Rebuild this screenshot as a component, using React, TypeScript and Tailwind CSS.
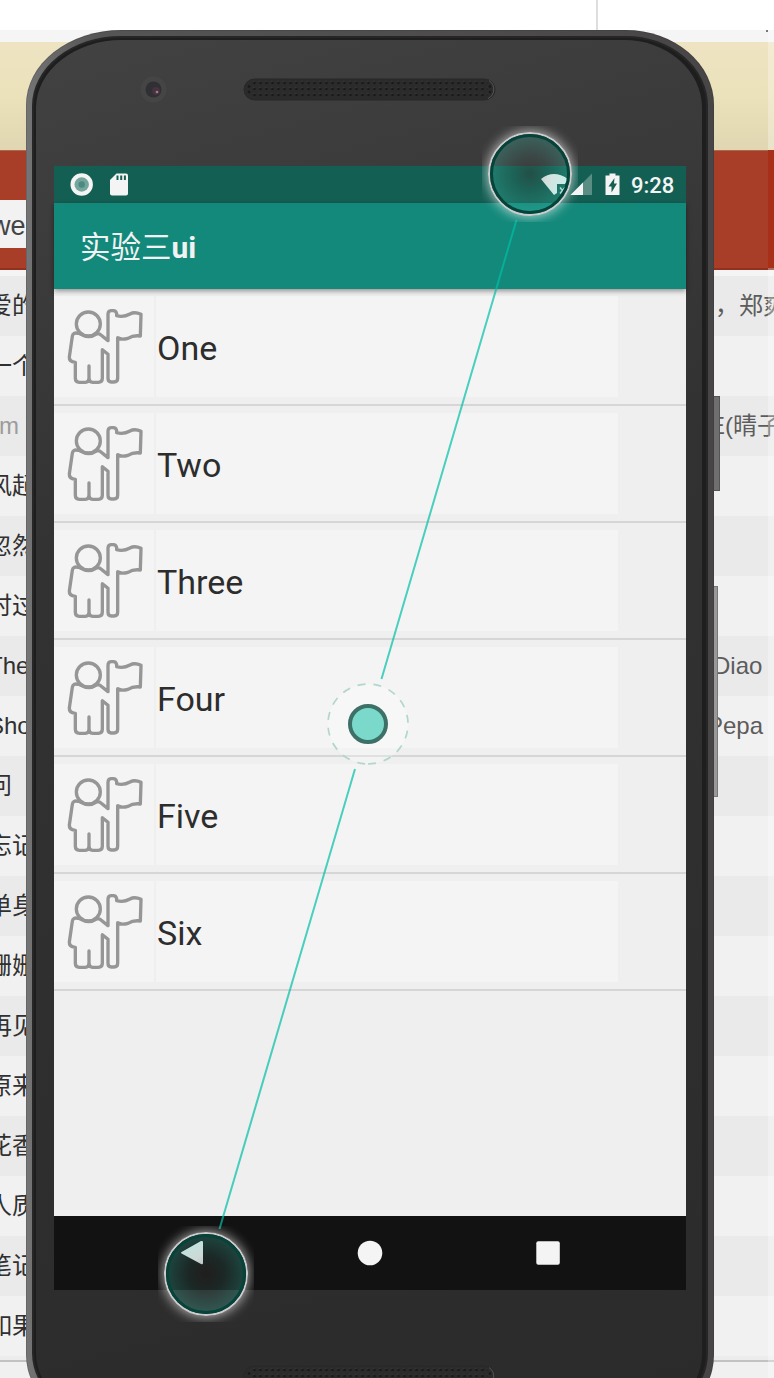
import React from "react";

const songs = [
  { left: "爱的", right: "，郑爽", shift: "ml-[715px]" },
  { left: "一个", right: "", shift: "" },
  { left: "m Y", right: "E(晴子", shift: "ml-[709px]", muted: true },
  { left: "风起", right: "", shift: "" },
  { left: "忽然", right: "", shift: "" },
  { left: "时过", right: "", shift: "" },
  { left: "The", right: "Diao", shift: "ml-[713px]" },
  { left: "Sho", right: "Pepa", shift: "ml-[707px]" },
  { left: "问", right: "", shift: "" },
  { left: "忘记", right: "", shift: "" },
  { left: "单身", right: "", shift: "" },
  { left: "珊姗", right: "", shift: "" },
  { left: "再见", right: "", shift: "" },
  { left: "原来", right: "", shift: "" },
  { left: "花香", right: "", shift: "" },
  { left: "人质", right: "", shift: "" },
  { left: "笔记", right: "", shift: "" },
  { left: "如果", right: "", shift: "" },
];

const items = ["One", "Two", "Three", "Four", "Five", "Six"];

function Backdrop() {
  return (
    <div className="flex h-full w-full flex-col font-['Liberation_Sans','Noto_Sans_CJK_SC',sans-serif]">
      <div className="flex h-[30px] shrink-0 bg-white">
        <div className="w-[598px] border-r-2 border-[#dedede]" />
      </div>
      <div className="h-3 shrink-0 bg-[#f5f5f5]" />
      <div className="h-[108px] shrink-0 bg-linear-to-b from-[#eee4c2] via-[#ebe1ba] to-[#e0d7b2]" />
      <div className="flex h-[120px] shrink-0 flex-col border-t border-b-2 border-t-[#ad6851] border-b-[#92301f] bg-[#a83d28] pt-[49px]">
        <div className="flex h-12 w-10 items-center bg-[#f2f2f2]">
          <span className="-ml-[9px] pt-[5px] text-[27px] leading-none text-[#444]">we</span>
        </div>
      </div>
      <div className="h-1.5 shrink-0 bg-[#f4f4f4]" />
      {songs.map((s) => (
        <div
          key={s.left}
          className="flex h-[60px] shrink-0 items-center text-2xl leading-none whitespace-nowrap odd:bg-[#f1f1f1] even:bg-[#eaeaea]"
        >
          <div className={s.muted ? "-ml-px w-px text-[#9c9c9c]" : "-ml-3 w-3 text-[#303030]"}>{s.left}</div>
          {s.right && <div className={`${s.shift} text-[#5c5c5c]`}>{s.right}</div>}
        </div>
      ))}
      <div className="h-1 shrink-0 bg-[#ececec]" />
      <div className="h-0.5 shrink-0 bg-[#c2c2c2]" />
      <div className="grow bg-[#f0f0f0]" />
    </div>
  );
}

function Speaker({ id }: { id: string }) {
  return (
    <svg width="254" height="23" viewBox="0 0 254 23">
      <defs>
        <pattern id={id} width="6" height="6" patternUnits="userSpaceOnUse" x="8.5" y="2">
          <circle cx="3" cy="3" r="1.35" fill="#191919" />
          <path d="M1.5 1.7 3 1.1" stroke="#414141" strokeWidth=".6" />
        </pattern>
      </defs>
      <rect x="1" y="1" width="251" height="21" rx="10.5" fill="#2b2b2b" stroke="#282828" />
      <path d="M245 20.6c7-3 8-14 1-18" fill="none" stroke="#606060" strokeWidth=".8" />
      <rect x="8.5" y="2" width="236" height="18" fill={`url(#${id})`} />
      <g fill="#191919">
        <circle cx="6" cy="8.5" r="1.3" />
        <circle cx="6" cy="14" r="1.3" />
        <circle cx="247" cy="8.5" r="1.3" />
        <circle cx="247" cy="14" r="1.3" />
      </g>
    </svg>
  );
}

function PersonIcon() {
  return (
    <svg
      width="100"
      height="100"
      viewBox="12 36 300 300"
      fill="none"
      stroke="#969696"
      strokeWidth="10"
      strokeLinejoin="round"
      strokeLinecap="round"
    >
      <circle cx="115" cy="117" r="36" />
      <path d="M84 145Q69 141 67 154L58 216Q57 230 76 232V280Q76 292 88 292H106Q117 292 117 280V243V280Q117 292 128 292H145Q157 292 157 280V194L174 208V280Q174 291 184 291H192Q203 291 203 280V158Q213 166 234 160Q250 150 271 153L273 88Q254 79 240 87Q220 98 200 92V86Q198 77 190 77H183Q174 78 174 88V167L149 147Q141 145 139 147Q117 162 91 147Q88 144 84 145" />
    </svg>
  );
}

function StatusBar() {
  return (
    <div className="flex h-[37px] shrink-0 items-center bg-[#145f53] text-[#f4f4f4]">
      <svg className="ml-4" width="60" height="24" viewBox="0 0 60 24">
        <circle cx="11.7" cy="11.5" r="11.2" fill="#f4f4f4" />
        <circle cx="11.7" cy="11.5" r="7.2" fill="#75a69d" />
        <circle cx="11.7" cy="11.5" r="3.2" fill="#4c897e" />
        <path d="M46.5 .5H56Q58 .5 58 2.5V20.5Q58 22.500 56 22.500H42Q40 22.500 40 20.500V7Z" fill="#f4f4f4" />
        <path d="M47.500 2.500v4.500M51.200 2.500v4.500M54.900 2.500v4.500" stroke="#145f53" strokeWidth="2" />
      </svg>
      <svg className="ml-auto" width="90" height="26" viewBox="0 0 90 26">
        <path d="M4 7Q16.500-3 31 7L28 12H20V21L17 23Z" fill="#fff" />
        <path d="M23 15.500l5 6M28 15.500l-5 6" stroke="#d8eee9" strokeWidth="1.500" />
        <path d="M33.500 23 55 1.500V23Z" fill="#5a8d84" />
        <path d="M33.500 23 46 10.500V23Z" fill="#f4f4f4" />
        <path d="M68.500 3.500h4V1.500h6v2h4V23H68.500Z" fill="#f4f4f4" />
        <path d="M77.500 6 71.500 14.500h3v6l5.500-9h-3Z" fill="#145f53" />
      </svg>
      <span className="mr-3 ml-[4px] w-[43px] pt-0.5 text-[22px] leading-none font-medium">9:28</span>
    </div>
  );
}

function Screen() {
  return (
    <div className="ml-[28px] flex h-[1124px] w-[632px] flex-col bg-[#efefef] font-[Roboto,'Noto_Sans_CJK_SC',sans-serif]">
      <StatusBar />
      <div className="z-10 flex h-[86px] shrink-0 items-center bg-[#13897b] pt-[3px] pl-[26px] text-[30px] text-[#f2f2f2] shadow-[0_2px_5px_rgba(0,0,0,0.4)]">
        <span className="text-[30.5px] font-normal">实验三</span>
        <span className="font-bold">ui</span>
      </div>
      <div className="flex grow flex-col">
        {items.map((item) => (
          <div key={item} className="flex h-[117px] shrink-0 gap-0.5 border-b-2 border-[#d6d6d6] pt-[7px]">
            <div className="h-[101px] w-[100px] bg-[#f4f4f4] pt-px">
              <PersonIcon />
            </div>
            <div className="flex h-[101px] w-[462px] items-center bg-[#f4f4f4] pt-[3px] pl-px text-[34px] leading-none text-[#2d2d2d]">
              {item}
            </div>
          </div>
        ))}
      </div>
      <div className="flex h-[74px] shrink-0 items-center justify-center bg-[#121212]">
        <svg width="380" height="28" viewBox="0 0 380 28" fill="#f4f4f4">
          <path d="M2 12.800 21 2Q23 1.500 23 3V24Q23 26 21 25L2 14.800Q0 13.800 2 12.800Z" />
          <circle cx="190" cy="14" r="12.300" />
          <rect x="356.300" y="2.200" width="23.500" height="23.500" rx="2" />
        </svg>
      </div>
    </div>
  );
}

function Phone() {
  return (
    <div className="isolate h-[1400px] w-[688px] rounded-[95px_88px_88px_95px/75px_75px_75px_75px] bg-linear-to-r from-[#666] via-[#4b4b4b] via-10% to-[#423f41] p-px">
      <div className="h-full w-full rounded-[94px_87px_87px_94px/74px] bg-linear-to-r from-[#747474] via-[#555] via-10% to-[#484547] px-[5px] pt-[5px] pb-1.5">
        <div className="h-full w-full rounded-[89px_82px_82px_89px/70px] border-2 border-[#262626] bg-[#1e1e1e] pt-0.5 pr-1 pl-0.5">
          <div className="h-full w-full rounded-[86px_78px_78px_86px/68px] bg-linear-165 from-[#424243] via-[#323232] via-35% to-[#2b2b2b]">
            <div className="-ml-[10px] flex h-[126px] flex-col pt-[34px]">
              <div className="flex items-center">
                <svg className="ml-[112px]" width="30" height="30" viewBox="0 0 30 30">
                  <circle cx="15.500" cy="15.500" r="13" fill="#464546" />
                  <circle cx="15.500" cy="15.500" r="8" fill="#302f33" />
                  <circle cx="18" cy="17" r="4" fill="#44343d" />
                  <circle cx="19" cy="18" r="1.300" fill="#a87991" />
                </svg>
                <div className="ml-[75px]"><Speaker id="top-speaker" /></div>
              </div>
            </div>
            <div className="-ml-[10px]"><Screen /></div>
            <div className="mt-[75px] ml-[207px]"><Speaker id="bottom-speaker" /></div>
          </div>
        </div>
      </div>
    </div>
  );
}

function TouchPoint() {
  return (
    <div className="flex size-24 items-center justify-center overflow-hidden">
      <div className="size-[84px] rounded-full border-2 border-[#ccc] shadow-[0_0_12px_1px_rgba(255,255,255,0.65)]">
        <div className="size-20 rounded-full border-[3px] border-[#06433b] bg-[radial-gradient(circle,rgba(60,50,50,0.35)_0%,rgba(60,120,108,0.22)_35%,rgba(60,190,170,0.28)_70%)]" />
      </div>
    </div>
  );
}

function Gesture() {
  return (
    <svg width="774" height="1378" viewBox="0 0 774 1378" fill="none">
      <path d="M516.5 220 381.5 679M355 769 219.5 1229" stroke="#00bfa5" strokeOpacity=".7" strokeWidth="2" />
      <circle cx="368" cy="724" r="40" fill="#fff" fillOpacity=".25" />
      <path d="M368 764A40 40 0 0 0 368 684A40 40 0 0 0 368 764" stroke="#b1d6cf" strokeWidth="1.7" strokeDasharray="8 8" />
      <circle cx="368" cy="724" r="18" fill="#7bd9cb" stroke="#3d7168" strokeWidth="4" />
    </svg>
  );
}

export default function App() {
  return (
    <div className="relative h-[1378px] w-[774px] overflow-hidden bg-white">
      <Backdrop />
      <div className="absolute top-[30px] right-0 h-[1348px] w-1.5 bg-white/30" />
      <div className="absolute top-[150px] right-0 h-[118px] w-1.5 bg-[#a93018]" />
      <div className="absolute top-[30px] right-1.5 size-0.5 bg-[#777]" />
      <div className="absolute top-[396px] left-[713px] h-[95px] w-[7px] border border-[#555] bg-[#706f70]" />
      <div className="absolute top-[586px] left-[713px] h-[211px] w-[5px] border border-[#777] bg-[#999]" />
      <div className="absolute top-[30px] left-[26px]"><Phone /></div>
      <div className="absolute top-0 left-0"><Gesture /></div>
      <div className="absolute top-[126px] left-[482px]"><TouchPoint /></div>
      <div className="absolute top-[1226px] left-[158px]"><TouchPoint /></div>
    </div>
  );
}
